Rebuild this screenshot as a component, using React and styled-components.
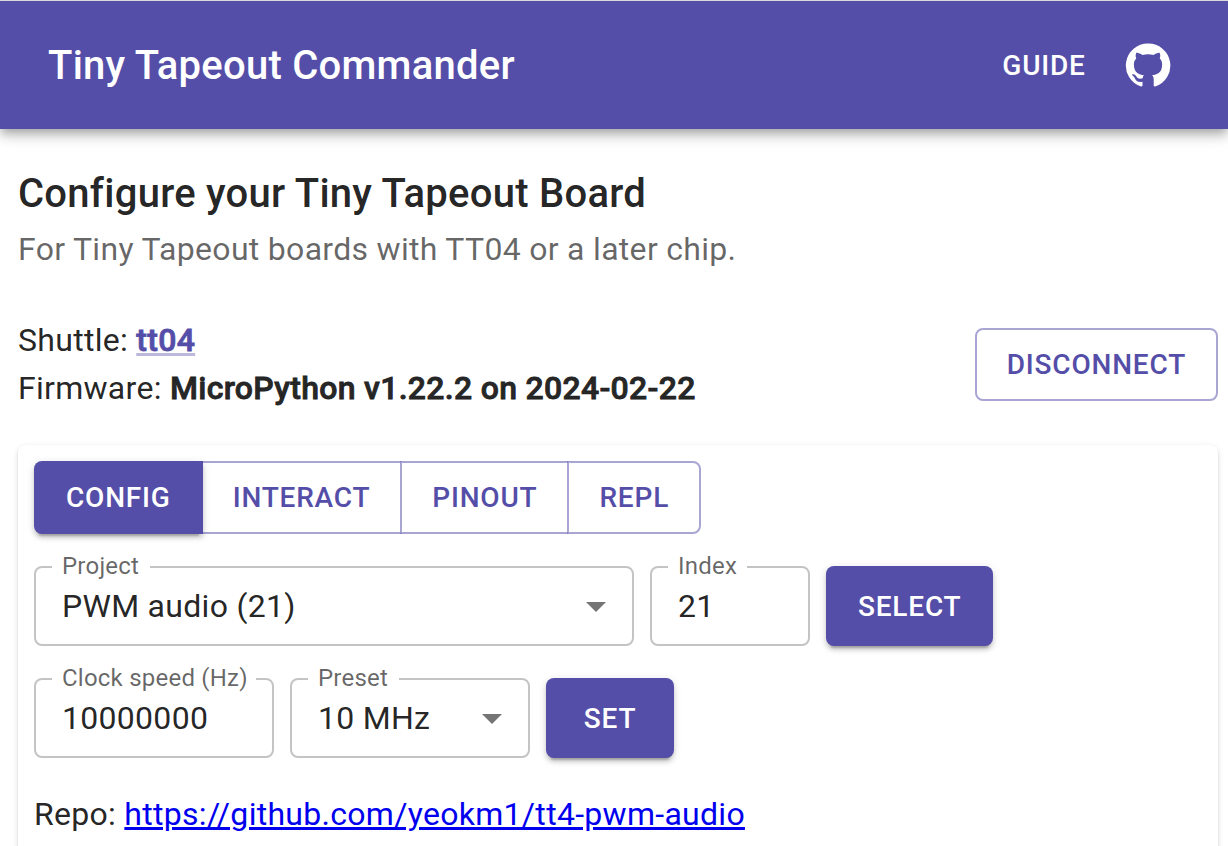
import React from "react";
import styled, { createGlobalStyle, css } from "styled-components";

const primary = "#544ea8";
const primaryHalf = "rgba(84, 78, 168, 0.5)";
const ink = "rgba(0, 0, 0, 0.87)";
const inkSoft = "rgba(0, 0, 0, 0.6)";
const raised =
  "0 6px 2px -4px rgba(0,0,0,0.2), 0 4px 4px 0 rgba(0,0,0,0.14), 0 2px 10px 0 rgba(0,0,0,0.12)";

const GlobalStyle = createGlobalStyle`
  *, *::before, *::after { box-sizing: border-box; }
  body {
    margin: 0;
    background: #fff;
    color: ${ink};
    font: 400 32px/48px Roboto, "Liberation Sans", sans-serif;
    letter-spacing: 0.29px;
    overflow: hidden;
  }
`;

const Page = styled.div`
  height: 100vh;
  overflow: hidden;
  border-top: 1px solid #dadada;
`;

const AppBar = styled.header`
  display: flex;
  align-items: center;
  height: 128px;
  padding: 0 40px 0 48px;
  background: ${primary};
  color: #fff;
  box-shadow: 0 4px 8px -2px rgba(0,0,0,0.2), 0 8px 10px 0 rgba(0,0,0,0.14),
    0 2px 20px 0 rgba(0,0,0,0.12);
`;

const AppTitle = styled.div`
  flex: 1;
  padding-top: 2px;
  font-size: 40px;
  font-weight: 500;
  line-height: 64px;
  letter-spacing: 0.25px;
`;

const Button = styled.button`
  min-width: 128px;
  margin: 0;
  padding: 12px 32px;
  border: 0;
  border-radius: 8px;
  background: transparent;
  color: ${primary};
  font: 500 28px/49px Roboto, "Liberation Sans", sans-serif;
  letter-spacing: 0.8px;
  text-transform: uppercase;
  white-space: nowrap;

  ${({ $variant }) =>
    $variant === "contained" &&
    css`
      background: ${primary};
      color: #fff;
      box-shadow: ${raised};
    `}
  ${({ $variant }) =>
    $variant === "outlined" &&
    css`
      padding: 10px 30px;
      border: 2px solid ${primaryHalf};
    `}
  ${({ $variant }) =>
    $variant === "text" &&
    css`
      padding: 12px 16px;
      color: inherit;
    `}
`;

const IconButton = styled.a`
  display: flex;
  padding: 16px;
  color: inherit;
`;

const Icon = styled.svg`
  width: 48px;
  height: 48px;
  fill: currentColor;
`;

const Main = styled.main`
  padding: 33px 10px 0 18px;
`;

const Heading = styled.h1`
  margin: 0;
  font-size: 40px;
  font-weight: 500;
  line-height: 64px;
  letter-spacing: 0.26px;
`;

const Subtitle = styled.p`
  margin: -1px 0 0;
  color: ${inkSoft};
  letter-spacing: 0.3px;
`;

const BoardInfo = styled.section`
  display: flex;
  justify-content: space-between;
  align-items: center;
  margin: 43px 0 33px;
`;

const InfoLine = styled.div`
  white-space: pre;
`;

const Strong = styled.strong`
  font-weight: 500;
  -webkit-text-stroke: 0.8px ${({ $stroke = "#212121" }) => $stroke};
`;

const ShuttleLink = styled.a`
  color: ${primary};
  text-decoration: underline;
  text-decoration-color: rgba(84, 78, 168, 0.4);
`;

const Panel = styled.section`
  display: flex;
  flex-direction: column;
  gap: 32px;
  min-height: 480px;
  padding: 16px;
  border-radius: 8px;
  background: #fff;
  box-shadow: 0 4px 2px -2px rgba(0,0,0,0.2), 0 2px 2px 0 rgba(0,0,0,0.14),
    0 2px 6px 0 rgba(0,0,0,0.12);
`;

const ButtonGroup = styled.div`
  display: flex;

  ${Button} {
    position: relative;
    min-width: 80px;
  }
  ${Button}:first-child {
    z-index: 1;
  }
  ${Button}:not(:first-child) {
    margin-left: -2px;
    border-top-left-radius: 0;
    border-bottom-left-radius: 0;
  }
  ${Button}:not(:last-child) {
    border-top-right-radius: 0;
    border-bottom-right-radius: 0;
  }
  ${Button}:not(:first-child):not(:last-child) {
    border-right-color: transparent;
  }
`;

const FormRow = styled.div`
  display: flex;
  gap: 16px;
  height: 80px;
`;

const Fieldset = styled.fieldset`
  display: block;
  flex: none;
  width: ${({ $width }) => $width}px;
  min-width: 0;
  height: 91px;
  margin: -11px 0 0;
  padding: 0 12px 0 16px;
  border: 2px solid #c4c4c4;
  border-radius: 8px;
`;

const Legend = styled.legend`
  width: ${({ $width }) => $width}px;
  height: 24px;
  padding: 0 0 0 10px;
  color: ${inkSoft};
  font-size: 24px;
  line-height: 22px;
  letter-spacing: 0.225px;
  white-space: nowrap;
`;

const FieldValue = styled.div`
  display: flex;
  align-items: center;
  justify-content: space-between;
  height: 54px;
  padding-left: 10px;
  line-height: 46px;
`;

const Arrow = styled(Icon)`
  color: rgba(0, 0, 0, 0.54);
`;

const Repo = styled.div`
  white-space: pre;
`;

const RepoLink = styled.a`
  color: #0000ee;
  text-decoration: underline;
`;

function Field({ label, value, width, notch, select }) {
  return (
    <Fieldset $width={width}>
      <Legend $width={notch}>{label}</Legend>
      <FieldValue>
        {value}
        {select && (
          <Arrow viewBox="0 0 24 24">
            <path d="M7 10l5 5 5-5z" />
          </Arrow>
        )}
      </FieldValue>
    </Fieldset>
  );
}

const tabs = ["Config", "Interact", "Pinout", "REPL"];

export default function App() {
  return (
    <Page>
      <GlobalStyle />
      <AppBar>
        <AppTitle>Tiny Tapeout Commander</AppTitle>
        <Button $variant="text">Guide</Button>
        <IconButton href="#" aria-label="GitHub">
          <Icon viewBox="0 0 24 24">
            <path d="M12 1.27a11 11 0 00-3.48 21.46c.55.09.73-.28.73-.55v-1.84c-3.03.64-3.67-1.46-3.67-1.46-.55-1.29-1.28-1.65-1.28-1.65-.92-.65.1-.65.1-.65 1.1 0 1.73 1.1 1.73 1.1.92 1.65 2.57 1.2 3.21.92a2 2 0 01.64-1.47c-2.47-.27-5.04-1.19-5.04-5.5 0-1.1.46-2.1 1.2-2.84a3.76 3.76 0 010-2.93s.91-.28 3.11 1.1c1.8-.49 3.7-.49 5.5 0 2.1-1.38 3.02-1.1 3.02-1.1a3.76 3.76 0 01.1 2.93c.83.74 1.2 1.74 1.2 2.94 0 4.21-2.57 5.13-5.04 5.4.45.37.82.92.82 2.02v3.03c0 .27.1.64.73.55A11 11 0 0012 1.27" />
          </Icon>
        </IconButton>
      </AppBar>
      <Main>
        <Heading>Configure your Tiny Tapeout Board</Heading>
        <Subtitle>For Tiny Tapeout boards with TT04 or a later chip.</Subtitle>
        <BoardInfo>
          <div>
            <InfoLine>
              Shuttle: <ShuttleLink href="#"><Strong $stroke={primary}>tt04</Strong></ShuttleLink>
            </InfoLine>
            <InfoLine>
              Firmware: <Strong>MicroPython v1.22.2 on 2024-02-22</Strong>
            </InfoLine>
          </div>
          <Button $variant="outlined">Disconnect</Button>
        </BoardInfo>
        <Panel>
          <ButtonGroup>
            {tabs.map((tab, i) => (
              <Button key={tab} $variant={i === 0 ? "contained" : "outlined"}>
                {tab}
              </Button>
            ))}
          </ButtonGroup>
          <FormRow>
            <Field label="Project" value="PWM audio (21)" width={600} notch={98} select />
            <Field label="Index" value="21" width={160} notch={79} />
            <Button $variant="contained">Select</Button>
          </FormRow>
          <FormRow>
            <Field label="Clock speed (Hz)" value="10000000" width={240} notch={204} />
            <Field label="Preset" value="10 MHz" width={240} notch={91} select />
            <Button $variant="contained">Set</Button>
          </FormRow>
          <Repo>
            Repo: <RepoLink href="#">https://github.com/yeokm1/tt4-pwm-audio</RepoLink>
          </Repo>
        </Panel>
      </Main>
    </Page>
  );
}
